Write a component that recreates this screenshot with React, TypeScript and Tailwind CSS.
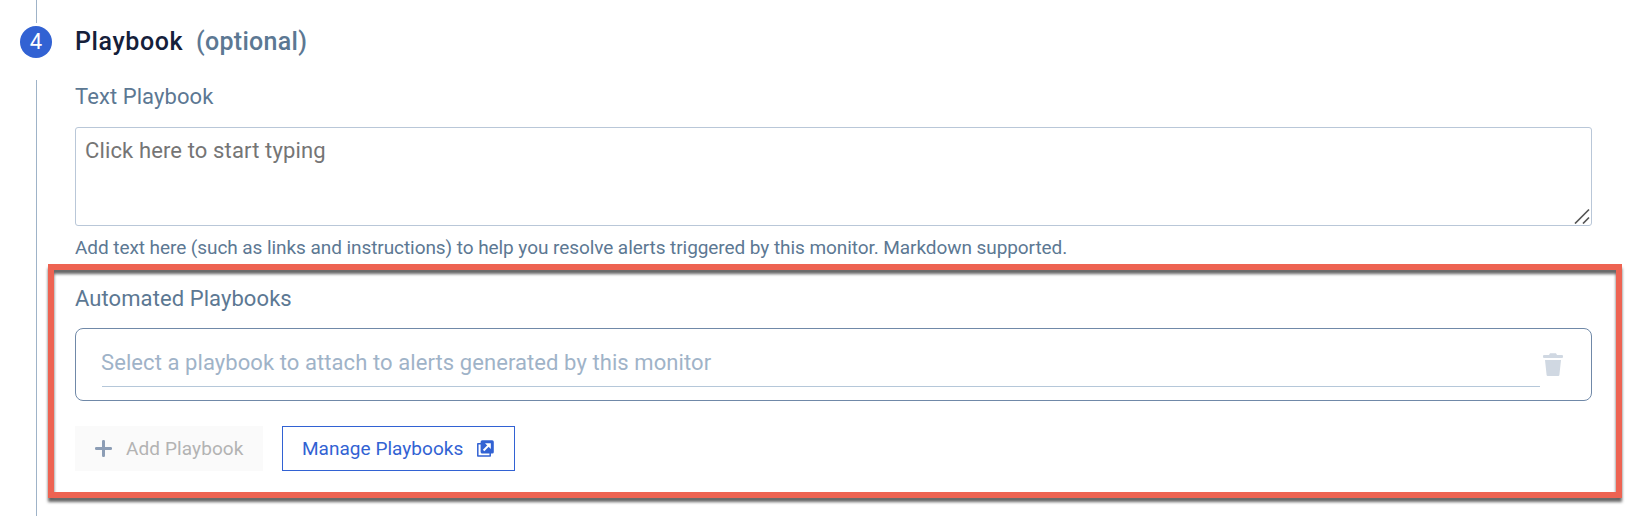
import React from "react";

function PlusIcon() {
  return (
    <svg width="17" height="17" viewBox="0 0 17 17" className="shrink-0" fill="none">
      <path d="M8.5 1.4v14.2M1.4 8.5h14.2" stroke="#8c9db5" strokeWidth="3" strokeLinecap="round" />
    </svg>
  );
}

function OpenIcon() {
  return (
    <svg width="17" height="17" viewBox="0 0 17 17" className="shrink-0" fill="none">
      <path d="M4 3.7H0.8v12.4H13.2V13" stroke="#3262d3" strokeWidth="1.5" strokeLinejoin="round" />
      <rect x="3.6" y="0.3" width="13.2" height="13.2" rx="1.6" fill="#3262d3" />
      <path d="M6.6 10.5L11.8 5.3" stroke="#fff" strokeWidth="2" />
      <path d="M8 3.2h5.8V9z" fill="#fff" />
    </svg>
  );
}

function TrashIcon() {
  return (
    <svg width="20" height="23" viewBox="0 0 20 23" className="block" fill="#d0d8e2">
      <path d="M1 2H6L7 0.3h6L14 2h5q1 0 1 1v1q0 1-1 1H1Q0 5 0 4V3Q0 2 1 2z" />
      <path d="M2 7H18L16.4 22Q16.3 23 15.2 23H4.8Q3.7 23 3.6 22z" />
    </svg>
  );
}

export default function App() {
  return (
    <div className="relative flex h-[516px] w-[1630px] overflow-hidden bg-white font-['Roboto',sans-serif] text-[#5c7893]">
      <div className="flex w-[75px] shrink-0 flex-col pl-5">
        <div className="ml-4 h-[23px] w-px bg-[#9fb3c8]" />
        <div className="mt-[3px] flex size-8 items-center justify-center rounded-full bg-[#3262d3] text-[22px] leading-8 text-white">
          4
        </div>
        <div className="mt-[22px] ml-4 w-px flex-1 bg-[#9fb3c8]" />
      </div>

      <div className="flex w-[1517px] flex-col items-stretch pt-[26px]">
        <h2 className="flex h-8 items-center text-[25px] leading-8 font-medium whitespace-nowrap">
          <span className="w-[121px] tracking-[0.6px] text-[#15203a]">Playbook</span>
          <span className="tracking-[0.3px]">(optional)</span>
        </h2>
        <label className="mt-[25px] h-7 text-[22px] leading-7 tracking-[0.08px]">Text Playbook</label>
        <textarea
          className="mt-4 block h-[99px] resize-none rounded-[3px] border border-[#b9c7d8] px-[9px] py-[9px] text-[22px] leading-7 tracking-[0.13px] placeholder:text-[#757575]"
          placeholder="Click here to start typing"
        />
        <p className="mt-[10px] h-6 text-[19px] leading-6 tracking-[-0.068px] whitespace-nowrap">
          Add text here (such as links and instructions) to help you resolve alerts triggered by this monitor. Markdown supported.
        </p>
        <label className="mt-[25px] h-7 text-[22px] leading-7 tracking-[0.08px]">Automated Playbooks</label>
        <div className="mt-[15px] flex h-[73px] items-start rounded-[8px] border border-[#7089a8] pl-[26px]">
          <div className="h-[58px] w-[1438px] border-b border-[#b5c7d9] pt-5 text-[22px] leading-7 tracking-[0.08px] text-[#9fb3c8]">
            <span className="-ml-px">Select a playbook to attach to alerts generated by this monitor</span>
          </div>
          <button className="mt-6 ml-[3px]" aria-label="Delete">
            <TrashIcon />
          </button>
        </div>
        <div className="mt-[25px] flex gap-[19px] text-[19px] leading-6 whitespace-nowrap">
          <button className="flex h-[45px] w-[188px] items-center gap-[14px] bg-[#fafafa] pl-5 tracking-[0.1px] text-[#b3b3b3]">
            <PlusIcon />
            <span>Add Playbook</span>
          </button>
          <button className="flex h-[45px] w-[233px] items-center justify-between border border-[#3262d3] pr-5 pl-[19px] tracking-[0.03px] text-[#3262d3]">
            <span>Manage Playbooks</span>
            <OpenIcon />
          </button>
        </div>
      </div>

      <svg className="absolute top-[208px] left-[1574px]" width="16" height="16" viewBox="0 0 16 16" fill="none" stroke="#555" strokeWidth="1.7">
        <path d="M1 15.5L15 1.5M9 15.5L15 9.5" />
      </svg>
      <div className="pointer-events-none absolute top-[264px] left-[48px] h-[234px] w-[1574px] border-[6px] border-[#ee6352] [filter:drop-shadow(0_4px_1.5px_rgba(0,0,0,0.6))]" />
    </div>
  );
}
